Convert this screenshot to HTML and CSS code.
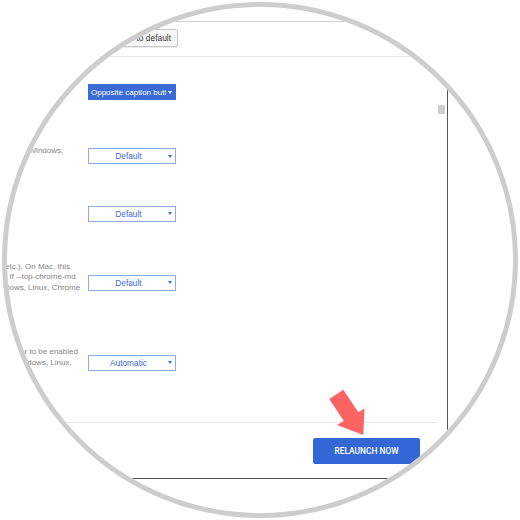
FILE: index.html
```html
<!DOCTYPE html>
<html lang="en">
<head>
    <meta charset="UTF-8">
    <meta name="viewport" content="width=device-width, initial-scale=1.0">
    <title>Experiments</title>
    <link rel="stylesheet" href="styles.css">
</head>
<body>
    <div class="lens">
        <div class="page">
            <header class="toolbar">
                <div class="actions">
                    <button class="reset-btn">Reset all to default</button>
                </div>
            </header>

            <section class="panel">
                <div class="flag-list">
                    <div class="rows">
                        <div class="row">
                            <div class="desc"></div>
                            <div class="select select-active">
                                <span class="value">Opposite caption butt</span>
                                <span class="caret"></span>
                            </div>
                        </div>
                        <div class="row">
                            <div class="desc">Linux, Windows,</div>
                            <div class="select">
                                <span class="value">Default</span>
                                <span class="caret"></span>
                            </div>
                        </div>
                        <div class="row">
                            <div class="desc"></div>
                            <div class="select">
                                <span class="value">Default</span>
                                <span class="caret"></span>
                            </div>
                        </div>
                        <div class="row">
                            <div class="desc">etc.). On Mac, this<br>. If --top-chrome-md<br>dows, Linux, Chrome</div>
                            <div class="select">
                                <span class="value">Default</span>
                                <span class="caret"></span>
                            </div>
                        </div>
                        <div class="row">
                            <div class="desc">flag or to be enabled<br>s, Windows, Linux,</div>
                            <div class="select">
                                <span class="value">Automatic</span>
                                <span class="caret"></span>
                            </div>
                        </div>
                    </div>
                    <div class="scrollbar"><div class="thumb"></div></div>
                </div>

                <footer class="footer">
                    <button class="relaunch-btn">RELAUNCH NOW</button>
                </footer>
            </section>
        </div>
    </div>

    <!-- annotation arrow pointing at the button -->
    <svg class="pointer" width="520" height="520" viewBox="0 0 520 520">
        <polygon points="343.3,389.7 358.3,412.2 364.5,408.5 363.3,435 337,425 343.8,420.9 329.3,399" fill="#fc6464"/>
    </svg>
</body>
</html>
```

FILE: styles.css
```css
body {
    margin: 0;
    background: #fff;
    font-family: "Liberation Sans", Arial, sans-serif;
    position: relative;
}
.lens {
    margin: 2px;
    width: 516px;
    height: 516px;
    box-sizing: border-box;
    border: 5px solid #cdcdcd;
    border-radius: 50%;
    overflow: hidden;
    background: #fff;
}
.page {
    padding-top: 14px;
}
.toolbar {
    border-top: 1px solid #cfcfcf;
    border-bottom: 1px solid #e8e8e8;
    padding: 7px 0 9px;
}
.actions {
    width: 171px;
    display: flex;
    justify-content: flex-end;
}
.reset-btn {
    height: 18px;
    padding: 0 6px;
    font-family: "Liberation Sans", Arial, sans-serif;
    font-size: 8.4px;
    color: #333;
    background: #f7f7f7;
    border: 1px solid #c8c8c8;
    border-radius: 2px;
    box-shadow: 0 1px 0 rgba(0, 0, 0, 0.08);
}
.panel {
    width: 441px;
    height: 422px;
    box-sizing: border-box;
    border-right: 1px solid #555;
    border-bottom: 1px solid #555;
    display: flex;
    flex-direction: column;
}
.flag-list {
    flex: 1;
    display: flex;
}
.rows {
    flex: 1;
}
.row {
    display: flex;
    align-items: center;
}
.row:nth-child(1) { height: 60px; }
.row:nth-child(2) { height: 68px; }
.row:nth-child(3) { height: 47px; }
.row:nth-child(4) { height: 91px; }
.row:nth-child(5) { height: 69px; }
.desc {
    width: 75px;
    margin-left: -2px;
    margin-right: 8px;
    font-size: 8px;
    line-height: 10.5px;
    color: #858585;
    white-space: nowrap;
}
.select {
    width: 88px;
    height: 16px;
    box-sizing: border-box;
    margin-top: 10px;
    display: flex;
    align-items: center;
    border: 1px solid #8ea9ee;
    background: #fff;
    color: #3f6ad8;
    font-size: 8.3px;
}
.select .value {
    flex: 1;
    text-align: center;
    padding-left: 4px;
    overflow: hidden;
    white-space: nowrap;
}
.caret {
    width: 0;
    height: 0;
    margin: 0 3px 0 4px;
    border-left: 2.5px solid transparent;
    border-right: 2.5px solid transparent;
    border-top: 3px solid currentColor;
}
.select-active {
    background: #3b6bd6;
    border-color: #3b6bd6;
    color: #fff;
}
.select-active .value {
    text-align: left;
    padding-left: 2px;
    font-size: 8px;
}
.select-active .caret {
    margin-left: 2px;
}
.scrollbar {
    width: 9px;
    padding-top: 48px;
}
.thumb {
    width: 7px;
    height: 9px;
    background: #cdcdcd;
}
.footer {
    border-top: 1px solid #e6e6e6;
    margin-right: 10px;
    padding: 15px 17px 14px 0;
    display: flex;
    justify-content: flex-end;
}
.relaunch-btn {
    width: 107px;
    height: 26px;
    border: none;
    border-radius: 2px;
    background: #3367d6;
    color: #fff;
    font-family: Roboto, "Liberation Sans", sans-serif;
    font-weight: 500;
    font-size: 8.4px;
}
.pointer {
    position: absolute;
    top: 0;
    left: 0;
    pointer-events: none;
}
```
